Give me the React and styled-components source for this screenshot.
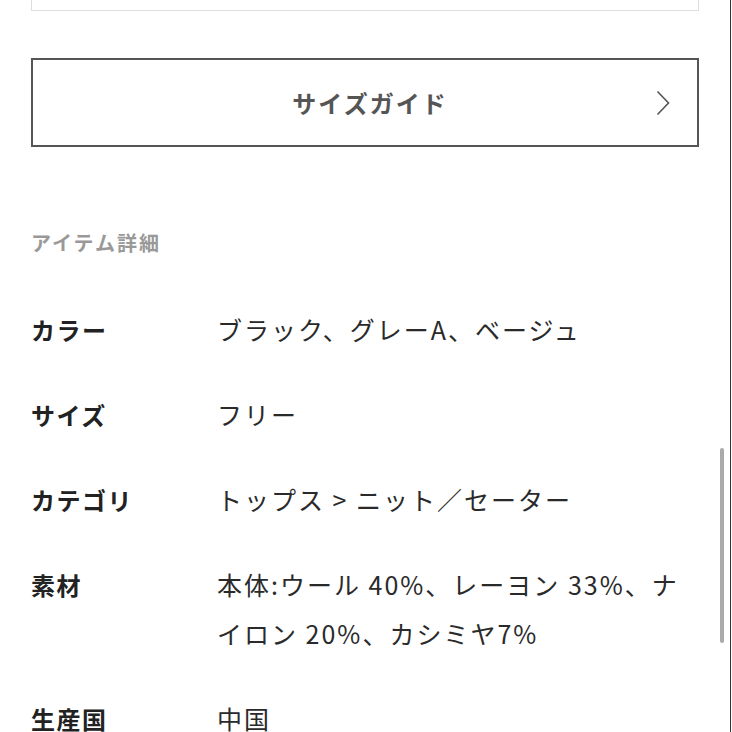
import React from "react";
import styled, { createGlobalStyle } from "styled-components";

const GlobalStyle = createGlobalStyle`
  html, body {
    margin: 0;
    padding: 0;
    background: #ffffff;
  }
  body {
    font-family: "Noto Sans CJK JP", "Noto Sans", sans-serif;
    color: #222;
    overflow: hidden;
  }
`;

const Page = styled.div`
  position: relative;
  width: 732px;
  height: 732px;
  overflow: hidden;
  box-sizing: border-box;
  padding: 0 33px 0 31px;
`;

const TopBox = styled.div`
  height: 11px;
  border: 1px solid #dddddd;
  border-top: none;
  box-sizing: border-box;
`;

const GuideButton = styled.button`
  display: grid;
  grid-template-columns: 1fr auto 1fr;
  align-items: center;
  width: 100%;
  height: 89px;
  margin-top: 47px;
  padding: 0 0 0 10px;
  background: #fff;
  border: 2px solid #555;
  box-sizing: border-box;
  font-family: inherit;
  font-size: 24px;
  font-weight: 700;
  letter-spacing: 2px;
  color: #555;
`;

const ButtonLabel = styled.span`
  grid-column: 2;
`;

const Chevron = styled.svg`
  grid-column: 3;
  justify-self: end;
  margin-right: 27px;
`;

const SectionTitle = styled.h3`
  margin: 81px 0 0;
  font-size: 20px;
  line-height: 30px;
  font-weight: 700;
  color: #999;
  letter-spacing: 2px;
`;

const Specs = styled.dl`
  display: flex;
  flex-direction: column;
  gap: 36px;
  margin: 47px 0 0;
`;

const Row = styled.div`
  display: grid;
  grid-template-columns: 186px 1fr;
  line-height: 49px;
`;

const Label = styled.dt`
  font-size: 24px;
  font-weight: 700;
  color: #222;
  letter-spacing: 1.5px;
`;

const Value = styled.dd`
  margin: 0;
  padding-right: 10px;
  font-size: 25px;
  font-weight: 400;
  color: #2a2a2a;
  letter-spacing: 2px;
`;

const ScrollThumb = styled.div`
  position: absolute;
  left: 720px;
  top: 448px;
  width: 4px;
  height: 195px;
  border-radius: 2px;
  background: #aaaaaa;
`;

const EdgeLine = styled.div`
  position: absolute;
  right: 1px;
  top: 0;
  width: 1px;
  height: 100%;
  background: #333;
`;

const specs = [
  { label: "カラー", value: "ブラック、グレーA、ベージュ" },
  { label: "サイズ", value: "フリー" },
  { label: "カテゴリ", value: "トップス > ニット／セーター" },
  { label: "素材", value: "本体:ウール 40%、レーヨン 33%、ナイロン 20%、カシミヤ7%" },
  { label: "生産国", value: "中国" },
];

export default function App() {
  return (
    <>
      <GlobalStyle />
      <Page>
        <TopBox />
        <GuideButton>
          <ButtonLabel>サイズガイド</ButtonLabel>
          <Chevron width="14" height="26" viewBox="0 0 14 26">
            <path d="M1.5 1.5 L12.5 13 L1.5 24.5" fill="none" stroke="#555" strokeWidth="1.6" />
          </Chevron>
        </GuideButton>
        <SectionTitle>アイテム詳細</SectionTitle>
        <Specs>
          {specs.map((s) => (
            <Row key={s.label}>
              <Label>{s.label}</Label>
              <Value>{s.value}</Value>
            </Row>
          ))}
        </Specs>
        <ScrollThumb />
        <EdgeLine />
      </Page>
    </>
  );
}
